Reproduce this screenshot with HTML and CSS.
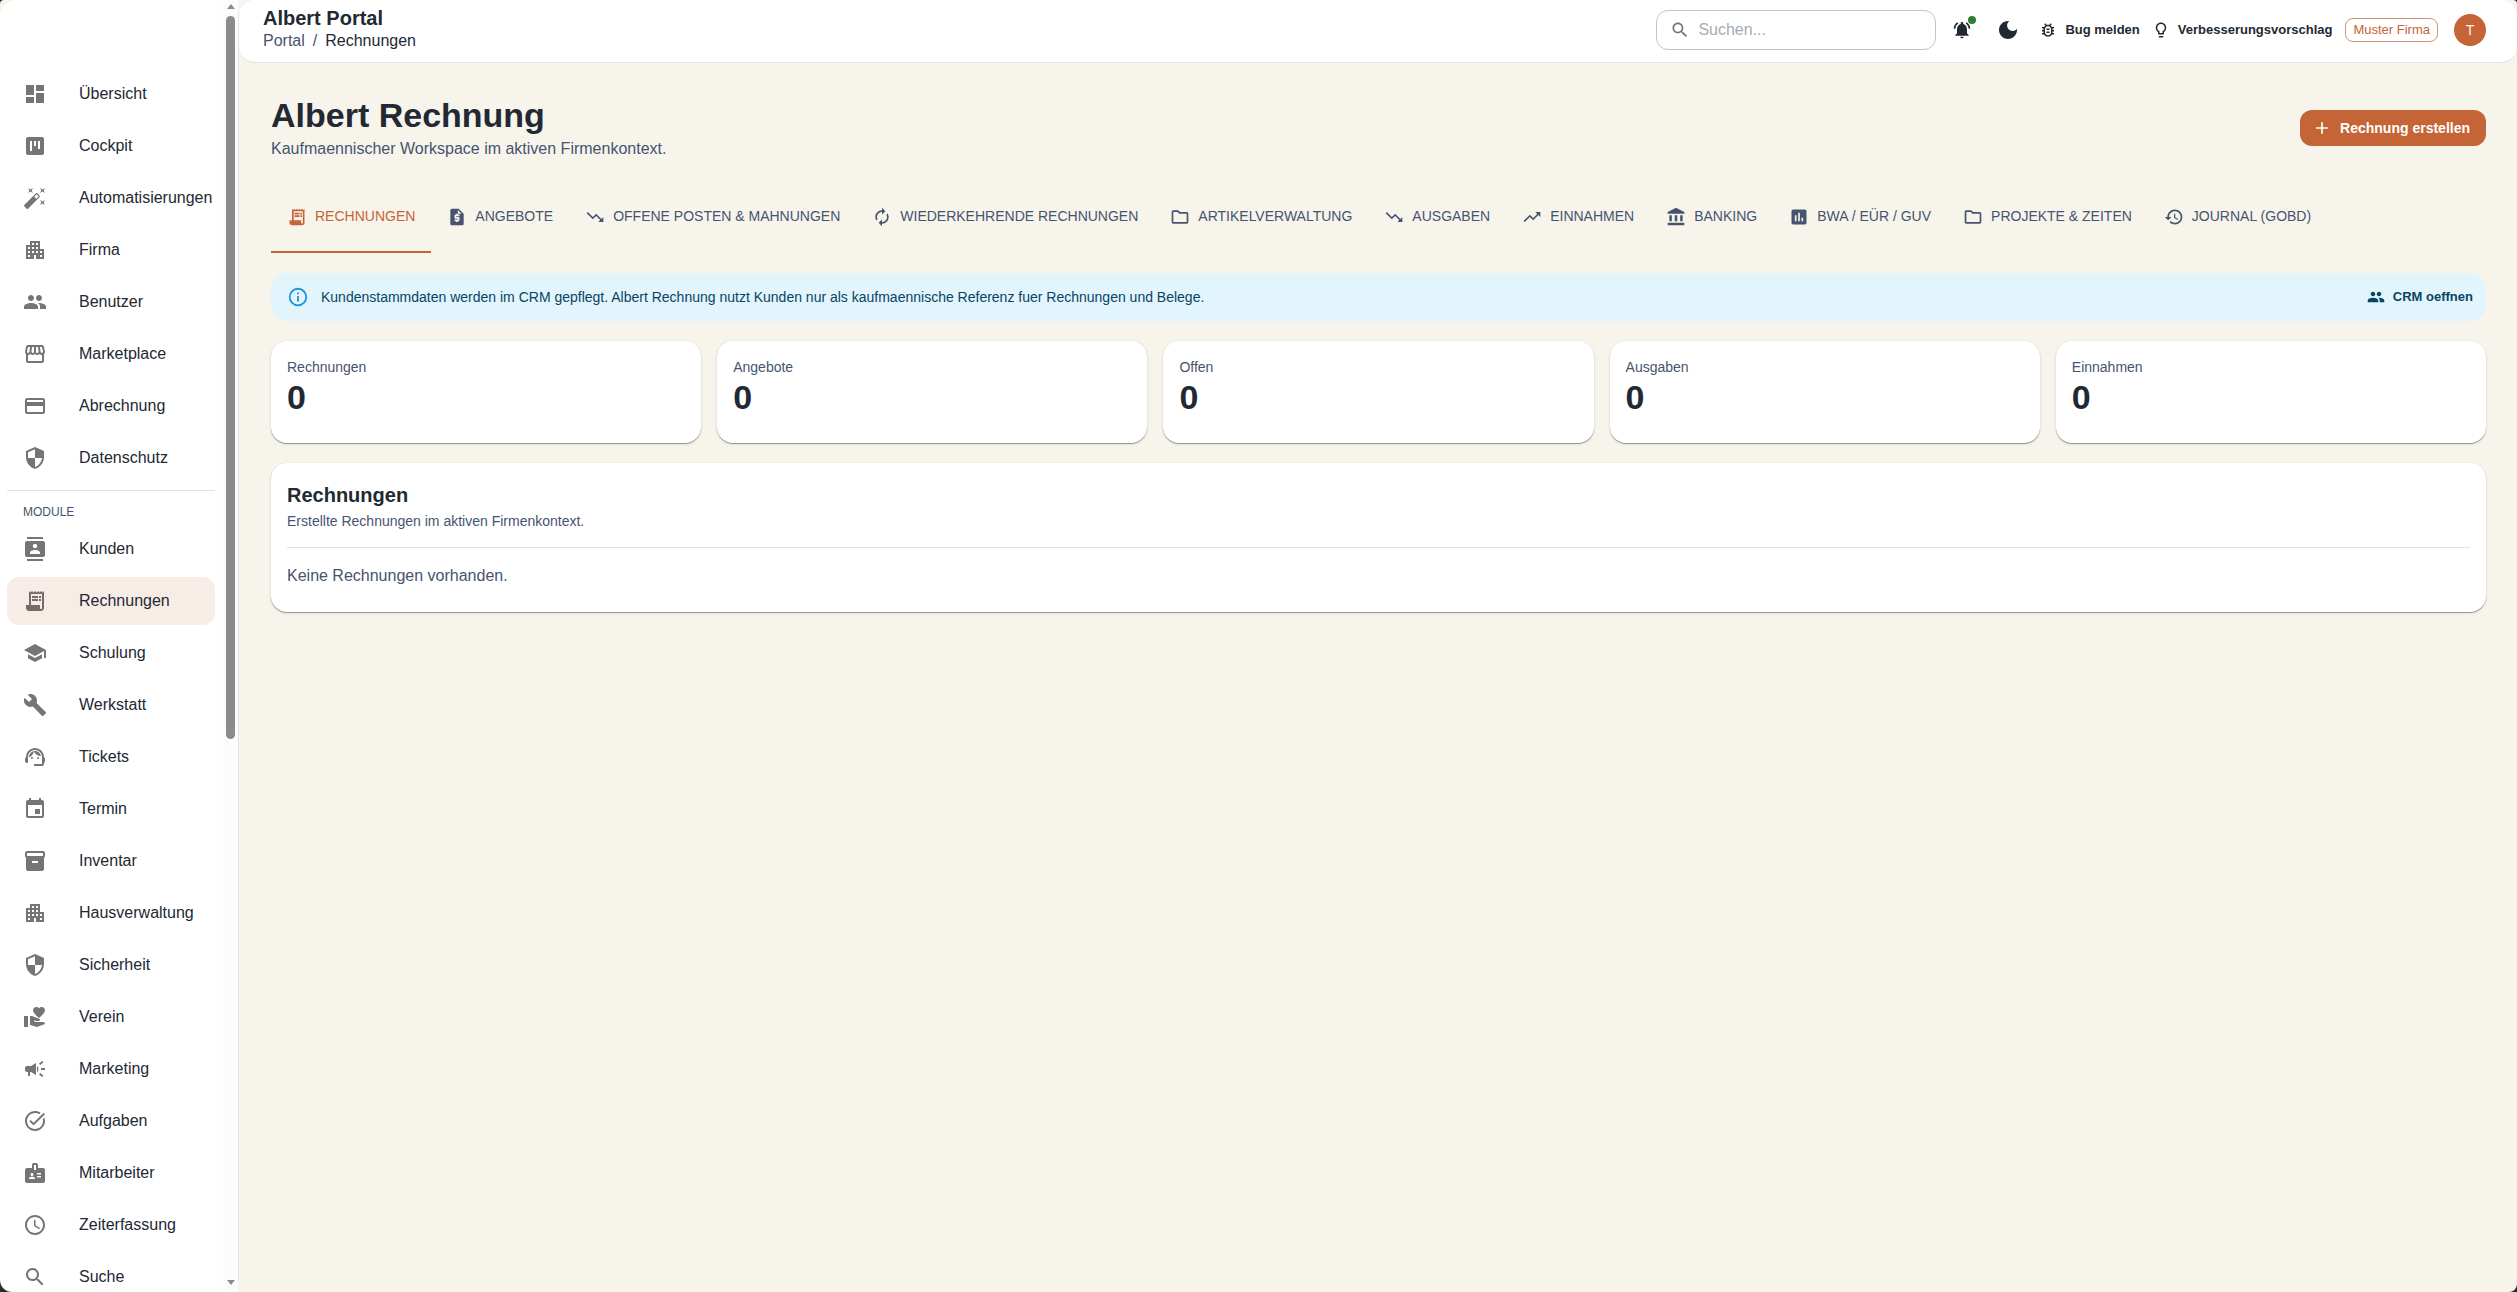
FILE: index.html
```html
<!DOCTYPE html>
<html lang="de">
<head>
  <meta charset="UTF-8">
  <meta name="viewport" content="width=device-width, initial-scale=1.0">
  <title>Albert Portal - Rechnungen</title>
  <link rel="stylesheet" href="styles.css">
</head>
<body>

<!-- Icons -->
<svg class="sprite" xmlns="http://www.w3.org/2000/svg">
  <symbol id="dashboard" viewBox="0 0 24 24"><path d="M3 13h8V3H3zm0 8h8v-6H3zm10 0h8V11h-8zm0-18v6h8V3z"/></symbol>
  <symbol id="kanban" viewBox="0 0 24 24"><path d="M19 3H5c-1.1 0-2 .9-2 2v14c0 1.1.9 2 2 2h14c1.1 0 2-.9 2-2V5c0-1.1-.9-2-2-2M9 17H7V7h2zm4-5h-2V7h2zm4 3h-2V7h2z"/></symbol>
  <symbol id="wand" viewBox="0 0 24 24"><path d="M7.5 5.6 10 7 8.6 4.5 10 2 7.5 3.4 5 2l1.4 2.5L5 7zm12 9.8L17 14l1.4 2.5L17 19l2.5-1.4L22 19l-1.4-2.5L22 14zM22 2l-2.5 1.4L17 2l1.4 2.5L17 7l2.5-1.4L22 7l-1.4-2.5zm-7.63 5.29c-.39-.39-1.02-.39-1.41 0L1.29 18.96c-.39.39-.39 1.02 0 1.41l2.34 2.34c.39.39 1.02.39 1.41 0L16.7 11.05c.39-.39.39-1.02 0-1.41zm-1.03 5.49-2.12-2.12 2.44-2.44 2.12 2.12z"/></symbol>
  <symbol id="building" viewBox="0 0 24 24"><path d="M17 11V3H7v4H3v14h8v-4h2v4h8V11zM7 19H5v-2h2zm0-4H5v-2h2zm0-4H5V9h2zm4 4H9v-2h2zm0-4H9V9h2zm0-4H9V5h2zm4 8h-2v-2h2zm0-4h-2V9h2zm0-4h-2V5h2zm4 12h-2v-2h2zm0-4h-2v-2h2z"/></symbol>
  <symbol id="people" viewBox="0 0 24 24"><path d="M16 11c1.66 0 2.99-1.34 2.99-3S17.66 5 16 5s-3 1.34-3 3 1.34 3 3 3m-8 0c1.66 0 2.99-1.34 2.99-3S9.66 5 8 5 5 6.34 5 8s1.34 3 3 3m0 2c-2.33 0-7 1.17-7 3.5V19h14v-2.5c0-2.33-4.67-3.5-7-3.5m8 0c-.29 0-.62.02-.97.05 1.16.84 1.97 1.97 1.97 3.45V19h6v-2.5c0-2.33-4.67-3.5-7-3.5"/></symbol>
  <symbol id="store" viewBox="0 0 24 24"><path d="m21.9 8.89-1.05-4.37c-.22-.9-1-1.52-1.91-1.52H5.05c-.9 0-1.69.63-1.9 1.52L2.1 8.89c-.24 1.02-.02 2.06.62 2.88.08.11.19.19.28.29V19c0 1.1.9 2 2 2h14c1.1 0 2-.9 2-2v-6.94c.09-.09.2-.18.28-.28.64-.82.87-1.87.62-2.89m-2.99-3.9 1.05 4.37c.1.42.01.84-.25 1.17-.14.18-.44.47-.94.47-.61 0-1.14-.49-1.21-1.14L16.98 5zM13 5h1.96l.54 4.52c.05.39-.07.78-.33 1.07-.22.26-.54.41-.95.41-.67 0-1.22-.59-1.22-1.31zM8.49 9.52 9.04 5H11v4.69c0 .72-.55 1.31-1.29 1.31-.34 0-.65-.15-.89-.41-.25-.29-.37-.68-.33-1.07m-4.45-.16L5.05 5h1.97l-.58 4.86c-.08.65-.6 1.14-1.21 1.14-.49 0-.8-.29-.93-.47-.27-.32-.36-.75-.26-1.17M5 19v-6.03c.08.01.15.03.23.03.87 0 1.66-.36 2.24-.95.6.6 1.4.95 2.31.95.87 0 1.65-.36 2.23-.93.59.57 1.39.93 2.29.93.84 0 1.64-.35 2.24-.95.58.59 1.37.95 2.24.95.08 0 .15-.02.23-.03V19z"/></symbol>
  <symbol id="card" viewBox="0 0 24 24"><path d="M20 4H4c-1.11 0-1.99.89-1.99 2L2 18c0 1.11.89 2 2 2h16c1.11 0 2-.89 2-2V6c0-1.11-.89-2-2-2m0 14H4v-6h16zm0-10H4V6h16z"/></symbol>
  <symbol id="shield" viewBox="0 0 24 24"><path d="M12 1 3 5v6c0 5.55 3.84 10.74 9 12 5.16-1.26 9-6.45 9-12V5zm0 10.99h7c-.53 4.12-3.28 7.79-7 8.94V12H5V6.3l7-3.11z"/></symbol>
  <symbol id="contacts" viewBox="0 0 24 24"><path d="M20 0H4v2h16zM4 24h16v-2H4zM20 4H4c-1.1 0-2 .9-2 2v12c0 1.1.9 2 2 2h16c1.1 0 2-.9 2-2V6c0-1.1-.9-2-2-2m-8 2.75c1.24 0 2.25 1.01 2.25 2.25s-1.01 2.25-2.25 2.25S9.75 10.24 9.75 9 10.76 6.75 12 6.75M17 17H7v-1.5c0-1.67 3.33-2.5 5-2.5s5 .83 5 2.5z"/></symbol>
  <symbol id="receipt" viewBox="0 0 24 24"><path d="M19.5 3.5 18 2l-1.5 1.5L15 2l-1.5 1.5L12 2l-1.5 1.5L9 2 7.5 3.5 6 2v14H3v3c0 1.66 1.34 3 3 3h12c1.66 0 3-1.34 3-3V2zM19 19c0 .55-.45 1-1 1s-1-.45-1-1v-3H8V5h11z"/><path d="M9 7h6v2H9zm7 0h2v2h-2zm-7 3h6v2H9zm7 0h2v2h-2z"/></symbol>
  <symbol id="school" viewBox="0 0 24 24"><path d="M5 13.18v4L12 21l7-3.82v-4L12 17zM12 3 1 9l11 6 9-4.91V17h2V9z"/></symbol>
  <symbol id="wrench" viewBox="0 0 24 24"><path d="m22.7 19-9.1-9.1c.9-2.3.4-5-1.5-6.9-2-2-5-2.4-7.4-1.3L9 6 6 9 1.6 4.7C.4 7.1.9 10.1 2.9 12.1c1.9 1.9 4.6 2.4 6.9 1.5l9.1 9.1c.4.4 1 .4 1.4 0l2.3-2.3c.5-.4.5-1.1.1-1.4"/></symbol>
  <symbol id="agent" viewBox="0 0 24 24"><path d="M21 12.22C21 6.73 16.74 3 12 3c-4.69 0-9 3.65-9 9.28-.6.34-1 .98-1 1.72v2c0 1.1.9 2 2 2h1v-6.1c0-3.87 3.13-7 7-7s7 3.13 7 7V19h-8v2h8c1.1 0 2-.9 2-2v-1.22c.59-.31 1-.92 1-1.64v-2.3c0-.7-.41-1.31-1-1.62"/><circle cx="9" cy="13" r="1"/><circle cx="15" cy="13" r="1"/><path d="M18 11.03C17.52 8.18 15.04 6 12.05 6c-3.03 0-6.29 2.51-6.03 6.45 2.47-1.01 4.33-3.21 4.86-5.89 1.31 2.63 4 4.44 7.12 4.47"/></symbol>
  <symbol id="event" viewBox="0 0 24 24"><path d="M17 12h-5v5h5zM16 1v2H8V1H6v2H5c-1.11 0-1.99.9-1.99 2L3 19c0 1.1.89 2 2 2h14c1.1 0 2-.9 2-2V5c0-1.1-.9-2-2-2h-1V1zm3 18H5V8h14z"/></symbol>
  <symbol id="box" viewBox="0 0 24 24"><path d="M20 2H4c-1 0-2 .9-2 2v3.01c0 .72.43 1.34 1 1.69V20c0 1.1 1.1 2 2 2h14c.9 0 2-.9 2-2V8.7c.57-.35 1-.97 1-1.69V4c0-1.1-1-2-2-2m-5 12H9v-2h6zm5-7H4V4h16z"/></symbol>
  <symbol id="volunteer" viewBox="0 0 24 24"><path d="M1 11h4v11H1zm15-7.75C16.65 2.49 17.66 2 18.7 2 20.55 2 22 3.45 22 5.3c0 2.27-2.91 4.9-6 7.7-3.09-2.81-6-5.44-6-7.7C10 3.45 11.45 2 13.3 2c1.04 0 2.05.49 2.7 1.25M20 17h-7l-2.09-.73.33-.94L13 16h2.82c.65 0 1.18-.53 1.18-1.18 0-.49-.31-.93-.77-1.11L8.97 11H7v9.02L14 22l8.01-3c-.01-1.1-.9-2-2.01-2"/></symbol>
  <symbol id="campaign" viewBox="0 0 24 24"><path d="M18 11v2h4v-2zm-2 6.61c.96.71 2.21 1.65 3.2 2.39.4-.53.8-1.07 1.2-1.6-.99-.74-2.24-1.68-3.2-2.4-.4.54-.8 1.08-1.2 1.61M20.4 5.6c-.4-.53-.8-1.07-1.2-1.6-.99.74-2.24 1.68-3.2 2.4.4.53.8 1.07 1.2 1.6.96-.72 2.21-1.65 3.2-2.4M4 9c-1.1 0-2 .9-2 2v2c0 1.1.9 2 2 2h1v4h2v-4h1l5 3V6L8 9zm11.5 3c0-1.33-.58-2.53-1.5-3.35v6.69c.92-.81 1.5-2.01 1.5-3.34"/></symbol>
  <symbol id="task" viewBox="0 0 24 24"><path d="M22 5.18 10.59 16.6l-4.24-4.24 1.41-1.41 2.83 2.83 10-10zm-2.21 5.04c.13.57.21 1.17.21 1.78 0 4.42-3.58 8-8 8s-8-3.58-8-8 3.58-8 8-8c1.58 0 3.04.46 4.28 1.25l1.44-1.44C16.1 2.67 14.13 2 12 2 6.48 2 2 6.48 2 12s4.48 10 10 10 10-4.48 10-10c0-1.19-.22-2.33-.6-3.39z"/></symbol>
  <symbol id="badge" viewBox="0 0 24 24"><path d="M20 7h-5V4c0-1.1-.9-2-2-2h-2c-1.1 0-2 .9-2 2v3H4c-1.1 0-2 .9-2 2v11c0 1.1.9 2 2 2h16c1.1 0 2-.9 2-2V9c0-1.1-.9-2-2-2M9 12c.83 0 1.5.67 1.5 1.5S9.83 15 9 15s-1.5-.67-1.5-1.5S8.17 12 9 12m3 6H6v-.75c0-1 2-1.5 3-1.5s3 .5 3 1.5zm1-9h-2V4h2zm5 7.5h-4V15h4zm0-3h-4V12h4z"/></symbol>
  <symbol id="clock" viewBox="0 0 24 24"><path d="M11.99 2C6.47 2 2 6.48 2 12s4.47 10 9.99 10C17.52 22 22 17.52 22 12S17.52 2 11.99 2M12 20c-4.42 0-8-3.58-8-8s3.58-8 8-8 8 3.58 8 8-3.58 8-8 8"/><path d="M12.5 7H11v6l5.25 3.15.75-1.23-4.5-2.67z"/></symbol>
  <symbol id="search" viewBox="0 0 24 24"><path d="M15.5 14h-.79l-.28-.27C15.41 12.59 16 11.11 16 9.5 16 5.91 13.09 3 9.5 3S3 5.91 3 9.5 5.91 16 9.5 16c1.61 0 3.09-.59 4.23-1.57l.27.28v.79l5 4.99L20.49 19zm-6 0C7.01 14 5 11.99 5 9.5S7.01 5 9.5 5 14 7.01 14 9.5 11.99 14 9.5 14"/></symbol>
  <symbol id="bell" viewBox="0 0 24 24"><path d="M7.58 4.08 6.15 2.65C3.75 4.48 2.17 7.3 2.03 10.5h2c.15-2.65 1.51-4.97 3.55-6.42m12.39 6.42h2c-.15-3.2-1.73-6.02-4.12-7.85l-1.42 1.43c2.02 1.45 3.39 3.77 3.54 6.42M18 11c0-3.07-1.64-5.64-4.5-6.32V4c0-.83-.67-1.5-1.5-1.5s-1.5.67-1.5 1.5v.68C7.63 5.36 6 7.92 6 11v5l-2 2v1h16v-1l-2-2zm-6 11c.14 0 .27-.01.4-.04.65-.14 1.18-.58 1.44-1.18.1-.24.15-.5.15-.78h-4c.01 1.1.9 2 2.01 2"/></symbol>
  <symbol id="moon" viewBox="0 0 24 24"><path d="M12 3c-4.97 0-9 4.03-9 9s4.03 9 9 9 9-4.03 9-9c0-.46-.04-.92-.1-1.36-.98 1.37-2.58 2.26-4.4 2.26-2.98 0-5.4-2.42-5.4-5.4 0-1.81.89-3.42 2.26-4.4-.44-.06-.9-.1-1.36-.1"/></symbol>
  <symbol id="bug" viewBox="0 0 24 24"><path d="M20 8h-2.81c-.45-.78-1.07-1.45-1.82-1.96L17 4.41 15.59 3l-2.17 2.17C12.96 5.06 12.49 5 12 5s-.96.06-1.41.17L8.41 3 7 4.41l1.62 1.63C7.88 6.55 7.26 7.22 6.81 8H4v2h2.09c-.05.33-.09.66-.09 1v1H4v2h2v1c0 .34.04.67.09 1H4v2h2.81c1.04 1.79 2.97 3 5.19 3s4.15-1.21 5.19-3H20v-2h-2.09c.05-.33.09-.66.09-1v-1h2v-2h-2v-1c0-.34-.04-.67-.09-1H20zm-4 4v3c0 .22-.03.47-.07.7l-.1.65-.37.65c-.72 1.24-2.04 2-3.46 2s-2.74-.77-3.46-2l-.37-.64-.1-.65C8.03 15.48 8 15.23 8 15v-4c0-.23.03-.48.07-.7l.1-.65.37-.65c.3-.52.72-.97 1.21-1.31l.57-.39.74-.18c.31-.08.63-.12.94-.12s.63.04.95.12l.68.16.61.42c.5.34.91.78 1.21 1.31l.38.65.1.65c.04.22.07.47.07.69zm-6 2h4v2h-4zm0-4h4v2h-4z"/></symbol>
  <symbol id="bulb" viewBox="0 0 24 24"><path d="M9 21c0 .55.45 1 1 1h4c.55 0 1-.45 1-1v-1H9zm3-19C8.14 2 5 5.14 5 9c0 2.38 1.19 4.47 3 5.74V17c0 .55.45 1 1 1h6c.55 0 1-.45 1-1v-2.26c1.81-1.27 3-3.36 3-5.74 0-3.86-3.14-7-7-7m2.85 11.1-.85.6V16h-4v-2.3l-.85-.6C7.8 12.16 7 10.63 7 9c0-2.76 2.24-5 5-5s5 2.24 5 5c0 1.63-.8 3.16-2.15 4.1"/></symbol>
  <symbol id="add" viewBox="0 0 24 24"><path d="M19 13h-6v6h-2v-6H5v-2h6V5h2v6h6z"/></symbol>
  <symbol id="quote" viewBox="0 0 24 24"><path d="M14 2H6c-1.1 0-1.99.9-1.99 2L4 20c0 1.1.89 2 1.99 2H18c1.1 0 2-.9 2-2V8zm1 9h-4v1h3c.55 0 1 .45 1 1v3c0 .55-.45 1-1 1h-1v1h-2v-1H9v-2h4v-1h-3c-.55 0-1-.45-1-1v-3c0-.55.45-1 1-1h1V8h2v1h2zm-2-3V3.5L17.5 8z"/></symbol>
  <symbol id="down" viewBox="0 0 24 24"><path d="m16 18 2.29-2.29-4.88-4.88-4 4L2 7.41 3.41 6l6 6 4-4 6.3 6.29L22 12v6z"/></symbol>
  <symbol id="up" viewBox="0 0 24 24"><path d="m16 6 2.29 2.29-4.88 4.88-4-4L2 16.59 3.41 18l6-6 4 4 6.3-6.29L22 12V6z"/></symbol>
  <symbol id="renew" viewBox="0 0 24 24"><path d="M12 6v3l4-4-4-4v3c-4.42 0-8 3.58-8 8 0 1.57.46 3.03 1.24 4.26L6.7 14.8c-.45-.83-.7-1.79-.7-2.8 0-3.31 2.69-6 6-6m6.76 1.74L17.3 9.2c.44.84.7 1.79.7 2.8 0 3.31-2.69 6-6 6v-3l-4 4 4 4v-3c4.42 0 8-3.58 8-8 0-1.57-.46-3.03-1.24-4.26"/></symbol>
  <symbol id="folder" viewBox="0 0 24 24"><path d="m9.17 6 2 2H20v10H4V6zM10 4H4c-1.1 0-1.99.9-1.99 2L2 18c0 1.1.9 2 2 2h16c1.1 0 2-.9 2-2V8c0-1.1-.9-2-2-2h-8z"/></symbol>
  <symbol id="bank" viewBox="0 0 24 24"><path d="M4 10h3v7H4zm6.5 0h3v7h-3zM2 19h20v3H2zm15-9h3v7h-3zm-5-9L2 6v2h20V6z"/></symbol>
  <symbol id="chart" viewBox="0 0 24 24"><path d="M19 3H5c-1.1 0-2 .9-2 2v14c0 1.1.9 2 2 2h14c1.1 0 2-.9 2-2V5c0-1.1-.9-2-2-2M9 17H7v-7h2zm4 0h-2V7h2zm4 0h-2v-4h2z"/></symbol>
  <symbol id="history" viewBox="0 0 24 24"><path d="M13 3c-4.97 0-9 4.03-9 9H1l3.89 3.89.07.14L9 12H6c0-3.87 3.13-7 7-7s7 3.13 7 7-3.13 7-7 7c-1.93 0-3.68-.79-4.94-2.06l-1.42 1.42C8.27 19.99 10.51 21 13 21c4.97 0 9-4.03 9-9s-4.03-9-9-9m-1 5v5l4.28 2.54.72-1.21-3.5-2.08V8z"/></symbol>
  <symbol id="info" viewBox="0 0 24 24"><path d="M11 9h2V7h-2m1 13c-4.41 0-8-3.59-8-8s3.59-8 8-8 8 3.59 8 8-3.59 8-8 8m0-18A10 10 0 0 0 2 12a10 10 0 0 0 10 10 10 10 0 0 0 10-10A10 10 0 0 0 12 2m-1 15h2v-6h-2z"/></symbol>
</svg>

<div class="app">
  <aside class="sidebar">
    <nav class="nav">
      <a class="nav-item"><svg class="icon"><use href="#dashboard"/></svg>Übersicht</a>
      <a class="nav-item"><svg class="icon"><use href="#kanban"/></svg>Cockpit</a>
      <a class="nav-item"><svg class="icon"><use href="#wand"/></svg>Automatisierungen</a>
      <a class="nav-item"><svg class="icon"><use href="#building"/></svg>Firma</a>
      <a class="nav-item"><svg class="icon"><use href="#people"/></svg>Benutzer</a>
      <a class="nav-item"><svg class="icon"><use href="#store"/></svg>Marketplace</a>
      <a class="nav-item"><svg class="icon"><use href="#card"/></svg>Abrechnung</a>
      <a class="nav-item"><svg class="icon"><use href="#shield"/></svg>Datenschutz</a>
      <div class="nav-label">MODULE</div>
      <a class="nav-item"><svg class="icon"><use href="#contacts"/></svg>Kunden</a>
      <a class="nav-item active"><svg class="icon"><use href="#receipt"/></svg>Rechnungen</a>
      <a class="nav-item"><svg class="icon"><use href="#school"/></svg>Schulung</a>
      <a class="nav-item"><svg class="icon"><use href="#wrench"/></svg>Werkstatt</a>
      <a class="nav-item"><svg class="icon"><use href="#agent"/></svg>Tickets</a>
      <a class="nav-item"><svg class="icon"><use href="#event"/></svg>Termin</a>
      <a class="nav-item"><svg class="icon"><use href="#box"/></svg>Inventar</a>
      <a class="nav-item"><svg class="icon"><use href="#building"/></svg>Hausverwaltung</a>
      <a class="nav-item"><svg class="icon"><use href="#shield"/></svg>Sicherheit</a>
      <a class="nav-item"><svg class="icon"><use href="#volunteer"/></svg>Verein</a>
      <a class="nav-item"><svg class="icon"><use href="#campaign"/></svg>Marketing</a>
      <a class="nav-item"><svg class="icon"><use href="#task"/></svg>Aufgaben</a>
      <a class="nav-item"><svg class="icon"><use href="#badge"/></svg>Mitarbeiter</a>
      <a class="nav-item"><svg class="icon"><use href="#clock"/></svg>Zeiterfassung</a>
      <a class="nav-item"><svg class="icon"><use href="#search"/></svg>Suche</a>
    </nav>
    <div class="scrollbar">
      <div class="arrow arrow-up"></div>
      <div class="thumb"></div>
      <div class="arrow arrow-down"></div>
    </div>
  </aside>

  <div class="main">
    <header class="topbar">
      <div class="brand">
        <div class="brand-title">Albert Portal</div>
        <div class="breadcrumb"><span>Portal</span><span>/</span><span class="current">Rechnungen</span></div>
      </div>
      <div class="search">
        <svg class="icon icon-20"><use href="#search"/></svg>
        <span>Suchen...</span>
      </div>
      <div class="bell">
        <svg class="icon icon-20"><use href="#bell"/></svg>
        <span class="dot"></span>
      </div>
      <svg class="icon moon"><use href="#moon"/></svg>
      <div class="link bug"><svg class="icon icon-18"><use href="#bug"/></svg>Bug melden</div>
      <div class="link idea"><svg class="icon icon-18"><use href="#bulb"/></svg>Verbesserungsvorschlag</div>
      <div class="chip">Muster Firma</div>
      <div class="avatar">T</div>
    </header>

    <main class="content">
      <div class="page-head">
        <div>
          <h1>Albert Rechnung</h1>
          <p>Kaufmaennischer Workspace im aktiven Firmenkontext.</p>
        </div>
        <button class="create"><svg class="icon icon-20"><use href="#add"/></svg>Rechnung erstellen</button>
      </div>

      <div class="tabs">
        <div class="tab active"><svg class="icon icon-20"><use href="#receipt"/></svg>RECHNUNGEN</div>
        <div class="tab"><svg class="icon icon-20"><use href="#quote"/></svg>ANGEBOTE</div>
        <div class="tab"><svg class="icon icon-20"><use href="#down"/></svg>OFFENE POSTEN &amp; MAHNUNGEN</div>
        <div class="tab"><svg class="icon icon-20"><use href="#renew"/></svg>WIEDERKEHRENDE RECHNUNGEN</div>
        <div class="tab"><svg class="icon icon-20"><use href="#folder"/></svg>ARTIKELVERWALTUNG</div>
        <div class="tab"><svg class="icon icon-20"><use href="#down"/></svg>AUSGABEN</div>
        <div class="tab"><svg class="icon icon-20"><use href="#up"/></svg>EINNAHMEN</div>
        <div class="tab"><svg class="icon icon-20"><use href="#bank"/></svg>BANKING</div>
        <div class="tab"><svg class="icon icon-20"><use href="#chart"/></svg>BWA / EÜR / GUV</div>
        <div class="tab"><svg class="icon icon-20"><use href="#folder"/></svg>PROJEKTE &amp; ZEITEN</div>
        <div class="tab"><svg class="icon icon-20"><use href="#history"/></svg>JOURNAL (GOBD)</div>
      </div>

      <div class="alert">
        <svg class="icon icon-22"><use href="#info"/></svg>
        <span class="alert-text">Kundenstammdaten werden im CRM gepflegt. Albert Rechnung nutzt Kunden nur als kaufmaennische Referenz fuer Rechnungen und Belege.</span>
        <div class="link crm"><svg class="icon icon-18"><use href="#people"/></svg>CRM oeffnen</div>
      </div>

      <div class="stats">
        <div class="card"><div class="stat-label">Rechnungen</div><div class="stat-value">0</div></div>
        <div class="card"><div class="stat-label">Angebote</div><div class="stat-value">0</div></div>
        <div class="card"><div class="stat-label">Offen</div><div class="stat-value">0</div></div>
        <div class="card"><div class="stat-label">Ausgaben</div><div class="stat-value">0</div></div>
        <div class="card"><div class="stat-label">Einnahmen</div><div class="stat-value">0</div></div>
      </div>

      <section class="card">
        <h2>Rechnungen</h2>
        <p class="card-sub">Erstellte Rechnungen im aktiven Firmenkontext.</p>
        <p class="empty">Keine Rechnungen vorhanden.</p>
      </section>
    </main>
  </div>
</div>
</body>
</html>
```

FILE: styles.css
```css
* {
  box-sizing: border-box;
}
html {
  background-color: #2a2a2e;
}
body {
  margin: 0;
  font-family: "Liberation Sans", Arial, sans-serif;
  font-size: 16px;
  line-height: 24px;
  color: #222933;
}
h1, h2, p {
  margin: 0;
}
.sprite {
  display: none;
}
.app {
  display: flex;
  height: 100vh;
  overflow: hidden;
  background-color: #f7f4ec;
  border-radius: 4px 4px 8px 12px;
}
.icon {
  width: 24px;
  height: 24px;
  fill: currentColor;
  flex-shrink: 0;
}
.icon-22 {
  width: 22px;
  height: 22px;
}
.icon-20 {
  width: 20px;
  height: 20px;
}
.icon-18 {
  width: 18px;
  height: 18px;
}

/* Sidebar */
.sidebar {
  display: flex;
  width: 239px;
  flex-shrink: 0;
  background-color: #fff;
  border-right: 1px solid #dfe3e8;
  border-radius: 16px;
}
.nav {
  flex: 1;
  display: flex;
  flex-direction: column;
  gap: 4px;
  min-width: 0;
  padding: 70px 8px 0 7px;
  overflow: hidden;
}
.nav-item {
  display: flex;
  align-items: center;
  gap: 32px;
  height: 48px;
  flex-shrink: 0;
  padding: 0 16px;
  border-radius: 12px;
  white-space: nowrap;
}
.nav-item .icon {
  color: #757575;
}
.nav-item.active {
  background-color: #f8ece6;
}
.nav-item.active .icon {
  color: #736d6a;
}
.nav-label {
  margin-top: 4px;
  margin-bottom: -4px;
  height: 35px;
  flex-shrink: 0;
  padding: 11px 16px 0;
  border-top: 1px solid #e0e3e6;
  color: #46546e;
  font-size: 12px;
  line-height: 20px;
}
.scrollbar {
  display: flex;
  flex-direction: column;
  align-items: center;
  width: 15px;
  padding: 4px 0 7px;
  background-color: #fcfcfc;
}
.arrow {
  border: 4.5px solid transparent;
}
.arrow-up {
  border-top: 0;
  border-bottom: 5px solid #8b8b8b;
}
.arrow-down {
  margin-top: auto;
  border-bottom: 0;
  border-top: 5px solid #8b8b8b;
}
.thumb {
  width: 9px;
  height: 723px;
  margin-top: 7px;
  background-color: #8b8b8b;
  border-radius: 5px;
}

/* Top bar */
.main {
  flex: 1;
  min-width: 0;
}
.topbar {
  display: flex;
  align-items: center;
  height: 63px;
  padding: 0 31px 2px 24px;
  background-color: #fff;
  border-bottom: 1px solid #dfe3e8;
  border-radius: 16px;
}
.brand {
  margin-right: auto;
}
.brand-title {
  font-size: 20px;
  font-weight: bold;
  line-height: 22px;
}
.breadcrumb {
  display: flex;
  gap: 8px;
  color: #46546e;
}
.breadcrumb .current {
  color: #222933;
}
.search {
  display: flex;
  align-items: center;
  gap: 8px;
  width: 280px;
  height: 40px;
  padding: 0 13px;
  border: 1px solid #c4c4c4;
  border-radius: 12px;
  color: #a8abaf;
}
.search .icon {
  color: #757575;
}
.bell {
  position: relative;
  display: flex;
  margin-left: 16px;
}
.dot {
  position: absolute;
  top: -4px;
  right: -4px;
  width: 8px;
  height: 8px;
  border-radius: 50%;
  background-color: #2e7d32;
}
.moon {
  margin-left: 24px;
}
.link {
  display: flex;
  align-items: center;
  gap: 8px;
  font-size: 13px;
  font-weight: bold;
}
.bug {
  margin-left: 19px;
}
.idea {
  margin-left: 12px;
}
.chip {
  height: 24px;
  margin-left: 13px;
  padding: 0 7px;
  border: 1px solid rgba(197, 100, 54, 0.7);
  border-radius: 8px;
  color: #c56436;
  font-size: 13px;
  line-height: 22px;
}
.avatar {
  width: 32px;
  height: 32px;
  margin-left: 16px;
  border-radius: 50%;
  background-color: #c56436;
  color: #f7f4ec;
  font-size: 14px;
  line-height: 32px;
  text-align: center;
}

/* Page */
.content {
  display: flex;
  flex-direction: column;
  gap: 20px;
  padding: 32px 31px 32px 32px;
}
.page-head {
  display: flex;
  align-items: center;
  justify-content: space-between;
}
.page-head h1 {
  font-size: 34px;
  line-height: 1.235;
}
.page-head p {
  color: #46546e;
}
.create {
  display: flex;
  align-items: center;
  gap: 8px;
  height: 36px;
  padding: 0 16px 0 12px;
  border: none;
  border-radius: 12px;
  background-color: #c56436;
  color: #fff;
  font-family: inherit;
  font-size: 14px;
  font-weight: bold;
}
.tabs {
  display: flex;
  height: 72px;
}
.tab {
  display: flex;
  align-items: center;
  gap: 8px;
  padding: 0 16px;
  color: #46546e;
  font-size: 14px;
  line-height: 1.25;
  white-space: nowrap;
}
.tab.active {
  color: #c56436;
  box-shadow: inset 0 -2px #c56436;
}
.alert {
  display: flex;
  align-items: center;
  height: 48px;
  padding: 0 13px 0 16px;
  border-radius: 16px;
  background-color: #e2f4fc;
  color: #084563;
  font-size: 14px;
}
.alert > .icon {
  color: #1a94da;
}
.alert-text {
  margin-left: 12px;
}
.crm {
  margin-left: auto;
}
.stats {
  display: grid;
  grid-template-columns: repeat(5, 1fr);
  gap: 16px;
}
.card {
  padding: 16px 16px 24px;
  background-color: #fff;
  border-radius: 16px;
  box-shadow: 0 1px 0 rgba(0, 0, 0, 0.3), 0 1px 3px rgba(0, 0, 0, 0.16);
}
.stat-label {
  color: #46546e;
  font-size: 14px;
  line-height: 20px;
}
.stat-value {
  font-size: 34px;
  font-weight: bold;
  line-height: 1.235;
}
.card h2 {
  font-size: 20px;
  line-height: 32px;
}
.card-sub {
  padding-bottom: 16px;
  border-bottom: 1px solid #e0e3e6;
  color: #46546e;
  font-size: 14px;
  line-height: 20px;
}
.empty {
  padding-top: 16px;
  color: #46546e;
}
```
